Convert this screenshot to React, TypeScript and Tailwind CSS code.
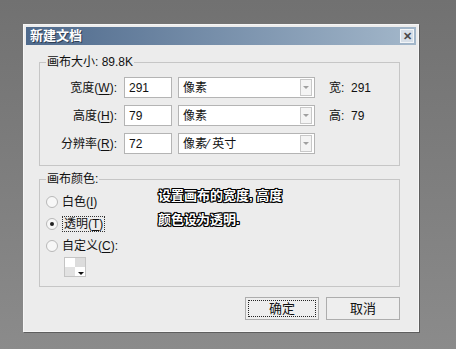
import React from 'react';

const font = { fontFamily: '"Liberation Sans", "Noto Sans CJK SC", sans-serif' };

const Key = ({ k }: { k: string }) => (
  <>
    (<span className="underline underline-offset-2">{k}</span>)
  </>
);

const SelectBox = ({ value }: { value: string }) => (
  <div className="flex h-[21px] w-[137px] items-center justify-between border border-[#b4b4b4] bg-white pl-[4px] pr-[2px]">
    <span className="whitespace-pre text-[12px] text-[#111]">{value}</span>
    <div className="flex h-[17px] w-[12px] items-center justify-center border border-[#c8c8c8] bg-[#f4f4f4]">
      <div className="h-0 w-0 border-x-[3px] border-t-[3px] border-x-transparent border-t-[#a0a0a0]" />
    </div>
  </div>
);

const SizeRow = ({ label, k, value, unit, info }: { label: string; k: string; value: string; unit: string; info?: string }) => (
  <div className="flex h-[21px] items-center">
    <div className="w-[78px] pr-[1px] text-right text-[12px] text-[#111]">
      {label}
      <Key k={k} />:
    </div>
    <div className="ml-[6px] flex h-[21px] w-[48px] items-center border border-[#b4b4b4] bg-white pl-[4px] text-[12px] text-[#111]">
      {value}
    </div>
    <div className="ml-[6px]">
      <SelectBox value={unit} />
    </div>
    {info && <div className="ml-[14px] whitespace-pre text-[12px] text-[#111]">{info}</div>}
  </div>
);

const Radio = ({ checked, children }: { checked?: boolean; children: React.ReactNode }) => (
  <div className="flex h-[22px] items-center">
    <div className="flex h-[12px] w-[12px] items-center justify-center rounded-full border border-[#b8b8b8] bg-[#f7f7f7]">
      {checked && <div className="h-[4px] w-[4px] rounded-full bg-[#222]" />}
    </div>
    <div className="ml-[4px] text-[12px] text-[#111]">{children}</div>
  </div>
);

export default function App() {
  const outline = '[text-shadow:1px_0_0_#000,-1px_0_0_#000,0_1px_0_#000,0_-1px_0_#000,1px_1px_0_#000,-1px_-1px_0_#000,1px_-1px_0_#000,-1px_1px_0_#000]';
  return (
    <div className="h-[349px] w-[456px] bg-gradient-to-b from-[#717171] to-[#8b8b8b] pl-[23px] pt-[24px]" style={font}>
      <div className="h-[308px] w-[396px] border border-[#f6f6f6] bg-[#ececec] p-[2px] shadow-[1px_1px_0_#5e5e5e]">
        {/* title bar */}
        <div className="flex h-[18px] items-center justify-between bg-gradient-to-r from-[#4f6a8c] to-[#a3b7ca] pl-[4px] pr-[2px]">
          <span className="text-[13px] font-bold text-white [text-shadow:1px_1px_0_#2f3f55]">新建文档</span>
          <div className="flex h-[14px] w-[14px] items-center justify-center border border-[#f2f5f8] bg-[#d7dfe8] text-[11px] font-bold leading-none text-[#4a4a4a]">
            ✕
          </div>
        </div>

        <div className="pl-[13px] pr-[16px] pt-[17px]">
          {/* canvas size */}
          <div className="relative h-[104px] border border-[#c6c6c6] pt-[14px]">
            <span className="absolute -top-[8px] left-[6px] bg-[#ececec] px-[1px] text-[12px] leading-[14px] text-[#111]">画布大小: 89.8K</span>
            <div className="flex flex-col gap-[7px]">
              <SizeRow label="宽度" k="W" value="291" unit="像素" info="宽:  291" />
              <SizeRow label="高度" k="H" value="79" unit="像素" info="高:  79" />
              <SizeRow label="分辨率" k="R" value="72" unit="像素⁄ 英寸" />
            </div>
          </div>

          {/* canvas colour */}
          <div className="relative mt-[13px] flex h-[108px] border border-[#c6c6c6]">
            <span className="absolute -top-[8px] left-[6px] bg-[#ececec] px-[1px] text-[12px] leading-[14px] text-[#111]">画布颜色:</span>
            <div className="w-[118px] pl-[6px] pt-[11px]">
              <Radio>白色<Key k="I" /></Radio>
              <Radio checked>
                <span className="border border-dotted border-[#333] px-[1px]">透明<Key k="T" /></span>
              </Radio>
              <Radio>自定义<Key k="C" />:</Radio>
              <div className="relative ml-[18px] grid h-[20px] w-[22px] grid-cols-2 grid-rows-2 border border-[#c4c4c4]">
                <div className="bg-white" />
                <div className="bg-[#dcdcdc]" />
                <div className="bg-[#e2e2e2]" />
                <div className="bg-white" />
                <div className="absolute bottom-[1px] right-[1px] h-0 w-0 border-x-[3px] border-t-[3px] border-x-transparent border-t-[#111]" />
              </div>
            </div>
            <div className={`pt-[4px] text-[13px] font-bold leading-[24px] text-white ${outline}`}>
              <div>设置画布的宽度, 高度</div>
              <div>颜色设为透明.</div>
            </div>
          </div>

          {/* buttons */}
          <div className="mt-[10px] flex justify-end gap-[7px]">
            <button className="h-[23px] w-[74px] border border-[#adadad] bg-[#eeeeee] p-[2px]">
              <div className="flex h-full items-center justify-center border border-dotted border-[#222] text-[13px] text-[#111]">确定</div>
            </button>
            <button className="flex h-[23px] w-[74px] items-center justify-center border border-[#adadad] bg-[#eeeeee] text-[13px] text-[#111]">
              取消
            </button>
          </div>
        </div>
      </div>
    </div>
  );
}
